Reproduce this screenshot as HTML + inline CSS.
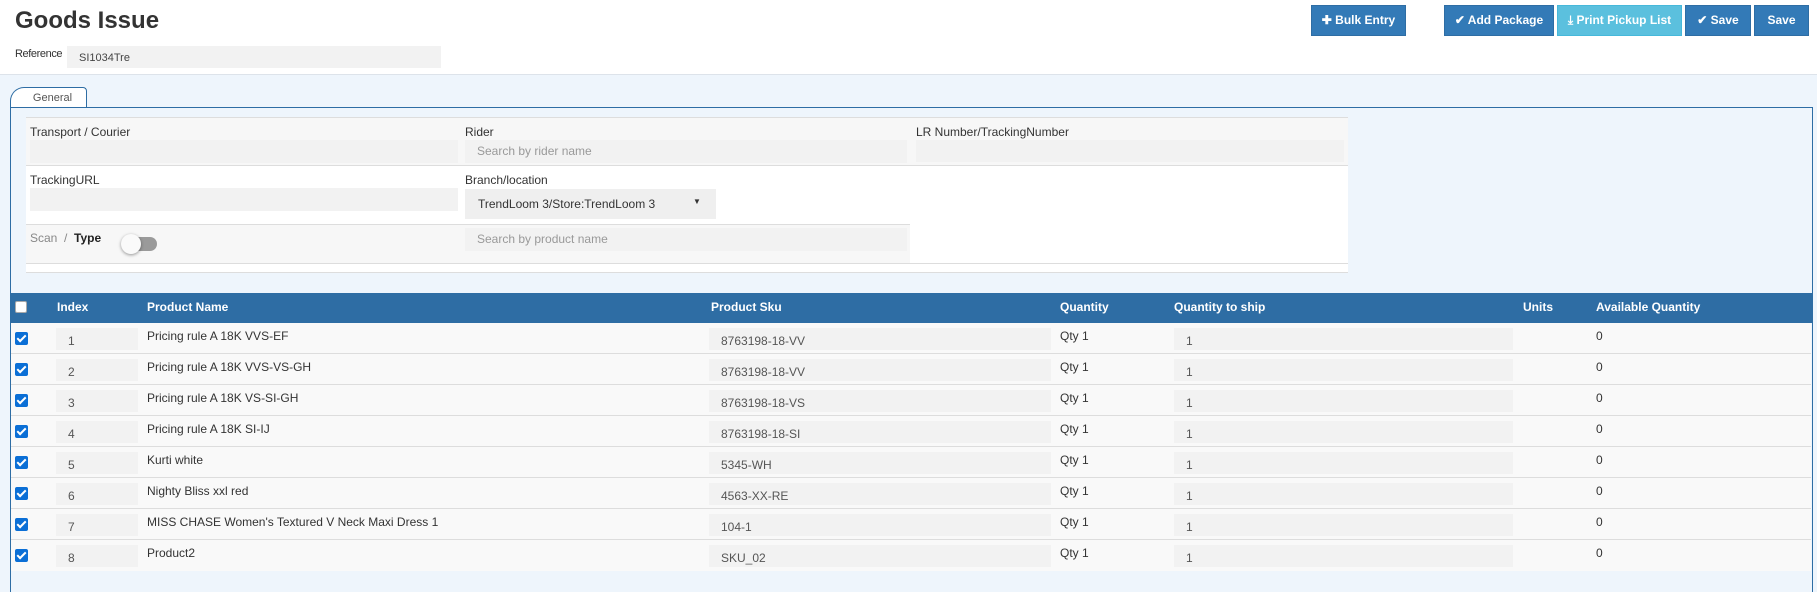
<!DOCTYPE html>
<html><head><meta charset="utf-8"><style>
*{box-sizing:border-box;margin:0;padding:0}
body{width:1817px;height:592px;overflow:hidden;background:#eef5fc;font-family:"Liberation Sans",sans-serif;font-size:12px;color:#333;position:relative}
.a{position:absolute}
.top{left:0;top:0;width:1817px;height:75px;background:#fff;border-bottom:1px solid #dde3ea}
.inp{position:absolute;background:#f2f2f2}
.ph{color:#999;font-size:12px;padding-left:12px;line-height:22px}
.btn{position:absolute;top:5px;height:31px;background:#337ab7;border:1px solid #2e6da4;color:#fff;font-weight:bold;font-size:12px;line-height:29px;text-align:center}
.lbl{position:absolute;font-size:12px;color:#333}
.th{position:absolute;top:0;color:#fff;font-weight:bold;font-size:12px;line-height:29px}
.row{position:absolute;left:11px;width:1800px;height:31px;background:#f9f9f9;border-bottom:1px solid #ddd}
.cb{position:absolute;left:4px;top:9px;width:13px;height:13px;background:#0b6fd6;border-radius:2px}
.cb:after{content:"";position:absolute;left:4px;top:1px;width:3px;height:7px;border:solid #fff;border-width:0 2px 2px 0;transform:rotate(45deg)}
.cell{position:absolute;top:6px;font-size:12px;color:#333}
.box{position:absolute;top:5px;height:22px;background:#f2f2f2;color:#555;padding-left:12px;line-height:26px;font-size:12px}
</style></head><body>
<div class="a top"></div>
<div class="a" style="left:15px;top:7px;font-size:24px;font-weight:bold;color:#333">Goods Issue</div>
<div class="lbl" style="left:15px;top:48px;font-size:11px;letter-spacing:-0.4px;width:52px;overflow:hidden;white-space:nowrap">Reference</div>
<div class="inp" style="left:67px;top:46px;width:374px;height:22px;font-size:11px;padding:6px 0 0 12px;color:#444">SI1034Tre</div>
<div class="btn" style="left:1311px;width:95px">✚ Bulk Entry</div>
<div class="btn" style="left:1444px;width:110px">✔ Add Package</div>
<div class="btn" style="left:1557px;width:125px;background:#5bc0de;border-color:#46b8da">⤓ Print Pickup List</div>
<div class="btn" style="left:1685px;width:66px">✔ Save</div>
<div class="btn" style="left:1754px;width:55px">Save</div>

<div class="a" style="left:10px;top:87px;width:77px;height:21px;background:#fff;border:1px solid #2e6da4;border-bottom:none;border-radius:14px 4px 0 0;font-size:11px;color:#555;text-align:center;line-height:20px;padding-left:8px">General</div>
<div class="a" style="left:10px;top:107px;width:1803px;height:485px;border:1px solid #2e6da4;border-bottom:none"></div>

<div class="a" style="left:26px;top:117px;width:1322px;height:49px;background:#f7f7f7;border-top:1px solid #ddd;border-bottom:1px solid #ddd"></div>
<div class="a" style="left:26px;top:166px;width:1322px;height:58px;background:#fff"></div>
<div class="a" style="left:26px;top:224px;width:884px;height:39px;background:#f7f7f7;border-top:1px solid #ddd"></div>
<div class="a" style="left:910px;top:224px;width:438px;height:39px;background:#fff"></div>
<div class="a" style="left:26px;top:263px;width:1322px;height:10px;background:#fff;border-top:1px solid #ddd;border-bottom:1px solid #ddd"></div>

<div class="lbl" style="left:30px;top:125px">Transport / Courier</div>
<div class="inp" style="left:30px;top:140px;width:428px;height:23px"></div>
<div class="lbl" style="left:465px;top:125px">Rider</div>
<div class="inp ph" style="left:465px;top:140px;width:442px;height:23px">Search by rider name</div>
<div class="lbl" style="left:916px;top:125px">LR Number/TrackingNumber</div>
<div class="inp" style="left:916px;top:140px;width:428px;height:22px"></div>
<div class="lbl" style="left:30px;top:173px">TrackingURL</div>
<div class="inp" style="left:30px;top:188px;width:428px;height:23px"></div>
<div class="lbl" style="left:465px;top:173px">Branch/location</div>
<div class="inp" style="left:465px;top:189px;width:251px;height:30px;background:#efefef;padding:8px 0 0 13px;color:#333">TrendLoom 3/Store:TrendLoom 3<span style="position:absolute;left:228px;top:8px;font-size:8px">▼</span></div>
<div class="lbl" style="left:30px;top:231px;color:#888">Scan &nbsp;/ &nbsp;<b style="color:#222">Type</b></div>
<div class="a" style="left:125px;top:237px;width:32px;height:14px;border-radius:7px;background:#9a9a9a"></div>
<div class="a" style="left:121px;top:234px;width:20px;height:20px;border-radius:50%;background:#fafafa;box-shadow:0 1px 3px rgba(0,0,0,.4)"></div>
<div class="inp ph" style="left:465px;top:228px;width:442px;height:23px">Search by product name</div>

<div class="a" style="left:11px;top:293px;width:1801px;height:30px;background:#2e6da4">
<div class="a" style="left:4px;top:8px;width:12px;height:12px;background:#fff;border:1px solid #aaa;border-radius:2px"></div>
<div class="th" style="left:46px">Index</div>
<div class="th" style="left:136px">Product Name</div>
<div class="th" style="left:700px">Product Sku</div>
<div class="th" style="left:1049px">Quantity</div>
<div class="th" style="left:1163px">Quantity to ship</div>
<div class="th" style="left:1512px">Units</div>
<div class="th" style="left:1585px">Available Quantity</div>
</div>

<div class="row" style="top:323px"><div class="cb"></div><div class="box" style="left:45px;width:82px">1</div><div class="cell" style="left:136px">Pricing rule A 18K VVS-EF</div><div class="box" style="left:698px;width:342px">8763198-18-VV</div><div class="cell" style="left:1049px">Qty 1</div><div class="box" style="left:1163px;width:339px">1</div><div class="cell" style="left:1585px">0</div></div>
<div class="row" style="top:354px"><div class="cb"></div><div class="box" style="left:45px;width:82px">2</div><div class="cell" style="left:136px">Pricing rule A 18K VVS-VS-GH</div><div class="box" style="left:698px;width:342px">8763198-18-VV</div><div class="cell" style="left:1049px">Qty 1</div><div class="box" style="left:1163px;width:339px">1</div><div class="cell" style="left:1585px">0</div></div>
<div class="row" style="top:385px"><div class="cb"></div><div class="box" style="left:45px;width:82px">3</div><div class="cell" style="left:136px">Pricing rule A 18K VS-SI-GH</div><div class="box" style="left:698px;width:342px">8763198-18-VS</div><div class="cell" style="left:1049px">Qty 1</div><div class="box" style="left:1163px;width:339px">1</div><div class="cell" style="left:1585px">0</div></div>
<div class="row" style="top:416px"><div class="cb"></div><div class="box" style="left:45px;width:82px">4</div><div class="cell" style="left:136px">Pricing rule A 18K SI-IJ</div><div class="box" style="left:698px;width:342px">8763198-18-SI</div><div class="cell" style="left:1049px">Qty 1</div><div class="box" style="left:1163px;width:339px">1</div><div class="cell" style="left:1585px">0</div></div>
<div class="row" style="top:447px"><div class="cb"></div><div class="box" style="left:45px;width:82px">5</div><div class="cell" style="left:136px">Kurti white</div><div class="box" style="left:698px;width:342px">5345-WH</div><div class="cell" style="left:1049px">Qty 1</div><div class="box" style="left:1163px;width:339px">1</div><div class="cell" style="left:1585px">0</div></div>
<div class="row" style="top:478px"><div class="cb"></div><div class="box" style="left:45px;width:82px">6</div><div class="cell" style="left:136px">Nighty Bliss xxl red</div><div class="box" style="left:698px;width:342px">4563-XX-RE</div><div class="cell" style="left:1049px">Qty 1</div><div class="box" style="left:1163px;width:339px">1</div><div class="cell" style="left:1585px">0</div></div>
<div class="row" style="top:509px"><div class="cb"></div><div class="box" style="left:45px;width:82px">7</div><div class="cell" style="left:136px">MISS CHASE Women's Textured V Neck Maxi Dress 1</div><div class="box" style="left:698px;width:342px">104-1</div><div class="cell" style="left:1049px">Qty 1</div><div class="box" style="left:1163px;width:339px">1</div><div class="cell" style="left:1585px">0</div></div>
<div class="row" style="top:540px;border-bottom:none"><div class="cb"></div><div class="box" style="left:45px;width:82px">8</div><div class="cell" style="left:136px">Product2</div><div class="box" style="left:698px;width:342px">SKU_02</div><div class="cell" style="left:1049px">Qty 1</div><div class="box" style="left:1163px;width:339px">1</div><div class="cell" style="left:1585px">0</div></div>
</body></html>
